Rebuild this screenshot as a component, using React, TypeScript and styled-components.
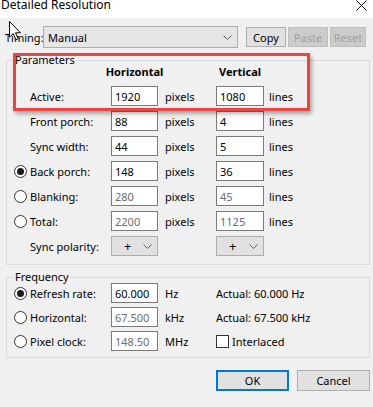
import React from 'react';
import styled, { createGlobalStyle } from 'styled-components';

const GlobalStyle = createGlobalStyle`
  html, body {
    margin: 0;
    padding: 0;
    background: #f0f0f0;
  }
  body {
    font-family: "Segoe UI", "Noto Sans", sans-serif;
    font-size: 11px;
    color: #000;
  }
`;

interface IParamRow {
	label: string;
	radio?: boolean;
	checked?: boolean;
	h: string;
	v: string;
	disabled?: boolean;
}

const paramRows: IParamRow[] = [
	{label: 'Active:', h: '1920', v: '1080'},
	{label: 'Front porch:', h: '88', v: '4'},
	{label: 'Sync width:', h: '44', v: '5'},
	{label: 'Back porch:', radio: true, checked: true, h: '148', v: '36'},
	{label: 'Blanking:', radio: true, h: '280', v: '45', disabled: true},
	{label: 'Total:', radio: true, h: '2200', v: '1125', disabled: true},
];

const freqRows = [
	{label: 'Refresh rate:', value: '60.000', unit: 'Hz', checked: true, disabled: false},
	{label: 'Horizontal:', value: '67.500', unit: 'kHz', checked: false, disabled: true},
	{label: 'Pixel clock:', value: '148.50', unit: 'MHz', checked: false, disabled: true},
];

const Chevron = () => (
	<svg width="9" height="5" viewBox="0 0 9 5">
		<polyline points="0.5,0.5 4.5,4.5 8.5,0.5" fill="none" stroke="#606060" strokeWidth="1"/>
	</svg>
);

export default function App() {
	return (
		<Window>
			<GlobalStyle/>
			<TitleBar>
				<Title>Detailed Resolution</Title>
				<svg width="11" height="11" viewBox="0 0 11 11" style={{marginRight: 6}}>
					<path d="M0.5 0.5 L10.5 10.5 M10.5 0.5 L0.5 10.5" stroke="#111" strokeWidth="1"/>
				</svg>
			</TitleBar>

			<Toolbar>
				<TimingLabel>Timing:</TimingLabel>
				<Combo>
					<span>Manual</span>
					<Chevron/>
				</Combo>
				<ToolButton>Copy</ToolButton>
				<ToolButton disabled>Paste</ToolButton>
				<ToolButton disabled $width={36}>Reset</ToolButton>
			</Toolbar>

			<Group>
				<Legend>Parameters</Legend>
				<HeaderRow>
					<ColumnHead $col={3}>Horizontal</ColumnHead>
					<ColumnHead $col={5}>Vertical</ColumnHead>
				</HeaderRow>
				<Grid>
					{paramRows.map(row => (
						<React.Fragment key={row.label}>
							<RadioCell>{row.radio && <Radio $checked={row.checked}/>}</RadioCell>
							<Label>{row.label}</Label>
							<Field $disabled={row.disabled}>{row.h}</Field>
							<Unit>pixels</Unit>
							<Field $disabled={row.disabled} $width={48}>{row.v}</Field>
							<Unit $pad={5}>lines</Unit>
						</React.Fragment>
					))}
					<RadioCell/>
					<Label>Sync polarity:</Label>
					<Select><span>+</span><Chevron/></Select>
					<span/>
					<Select $width={48}><span>+</span><Chevron/></Select>
					<span/>
				</Grid>
			</Group>

			<Group $top={6} $bottom={6}>
				<Legend>Frequency</Legend>
				<Grid $gap={4}>
					{freqRows.map((row, i) => (
						<React.Fragment key={row.label}>
							<RadioCell><Radio $checked={row.checked}/></RadioCell>
							<Label>{row.label}</Label>
							<Field $disabled={row.disabled}>{row.value}</Field>
							<Unit>{row.unit}</Unit>
							<Extra>
								{i === 0 && 'Actual: 60.000 Hz'}
								{i === 1 && 'Actual: 67.500 kHz'}
								{i === 2 && <><Checkbox/>Interlaced</>}
							</Extra>
						</React.Fragment>
					))}
				</Grid>
			</Group>

			<Footer>
				<DialogButton $primary>OK</DialogButton>
				<DialogButton>Cancel</DialogButton>
			</Footer>

			<Highlight/>
			<Cursor width="13" height="20" viewBox="0 0 13 20">
				<path d="M0.5 0.5 L0.5 16 L4.2 12.6 L7 18.8 L9.2 17.8 L6.5 11.8 L11.5 11.8 Z" fill="#fff" stroke="#000" strokeWidth="1"/>
			</Cursor>
		</Window>
	);
}


const Window = styled.div`
  position: relative;
  width: 373px;
  height: 407px;
  background: #f0f0f0;
  overflow: hidden;
  display: flex;
  flex-direction: column;
`;

const TitleBar = styled.div`
  height: 18px;
  flex-shrink: 0;
  background: #ffffff;
  display: flex;
  justify-content: space-between;
  align-items: flex-start;
`;

const Title = styled.span`
  font-size: 12px;
  line-height: 12px;
  margin-top: -1px;
  padding-left: 1px;
`;

const Toolbar = styled.div`
  display: flex;
  align-items: center;
  height: 22px;
  margin-top: 8px;
  padding-left: 5px;
`;

const TimingLabel = styled.span`
  width: 38px;
`;

const Combo = styled.div`
  box-sizing: border-box;
  width: 195px;
  height: 22px;
  margin-right: 8px;
  padding: 0 5px 0 4px;
  display: flex;
  align-items: center;
  justify-content: space-between;
  background: #e5e5e5;
  border: 1px solid #adadad;
`;

const ToolButton = styled.div<{ disabled?: boolean; $width?: number }>`
  box-sizing: border-box;
  width: ${p => p.$width || 40}px;
  height: 20px;
  margin-right: 2px;
  display: flex;
  align-items: center;
  justify-content: center;
  background: ${p => p.disabled ? '#cccccc' : '#e1e1e1'};
  border: 1px solid ${p => p.disabled ? '#bfbfbf' : '#adadad'};
  color: ${p => p.disabled ? '#a0a0a0' : '#000'};
`;

const Group = styled.fieldset<{ $top?: number; $bottom?: number }>`
  margin: ${p => p.$top ?? 6}px 3px 0 6px;
  padding: 0 7px ${p => p.$bottom ?? 8}px 7px;
  min-width: 0;
  border: 1px solid #dcdcdc;
`;

const Legend = styled.legend`
  padding: 0 1px;
  font-size: 11px;
  line-height: 12px;
`;

const columns = '16px 81px 47px 58px 48px 1fr';

const HeaderRow = styled.div`
  display: grid;
  grid-template-columns: ${columns};
  height: 14px;
  margin: -1px 0 7px;
`;

const ColumnHead = styled.div<{ $col: number }>`
  grid-column: ${p => p.$col};
  justify-self: center;
  white-space: nowrap;
  font-weight: 700;
  line-height: 14px;
`;

const Grid = styled.div<{ $gap?: number }>`
  display: grid;
  grid-template-columns: ${columns};
  grid-auto-rows: 20px;
  row-gap: ${p => p.$gap ?? 5}px;
  align-items: center;
`;

const RadioCell = styled.div`
  display: flex;
  align-items: center;
`;

const Radio = styled.span<{ $checked?: boolean }>`
  box-sizing: border-box;
  width: 13px;
  height: 13px;
  border: 1px solid #333;
  border-radius: 50%;
  background: #fff;
  display: flex;
  align-items: center;
  justify-content: center;

  &::after {
    content: '';
    width: 7px;
    height: 7px;
    border-radius: 50%;
    background: ${p => p.$checked ? '#1a1a1a' : 'transparent'};
  }
`;

const Label = styled.span`
  white-space: nowrap;
`;

const Field = styled.div<{ $disabled?: boolean; $width?: number }>`
  box-sizing: border-box;
  width: ${p => p.$width || 47}px;
  height: 20px;
  padding-left: 3px;
  display: flex;
  align-items: center;
  background: #fff;
  border: 1px solid #7a7a7a;
  color: ${p => p.$disabled ? '#6d6d6d' : '#000'};
`;

const Unit = styled.span<{ $pad?: number }>`
  padding-left: ${p => p.$pad ?? 7}px;
  white-space: nowrap;
`;

const Select = styled.div<{ $width?: number }>`
  box-sizing: border-box;
  width: ${p => p.$width || 47}px;
  height: 20px;
  padding: 0 5px 0 12px;
  display: flex;
  align-items: center;
  justify-content: space-between;
  background: #e1e1e1;
  border: 1px solid #adadad;
  font-size: 13px;
`;

const Extra = styled.div`
  grid-column: 5 / span 2;
  display: flex;
  align-items: center;
  gap: 3px;
  white-space: nowrap;
`;

const Checkbox = styled.span`
  box-sizing: border-box;
  width: 13px;
  height: 13px;
  background: #fff;
  border: 1px solid #333;
`;

const Footer = styled.div`
  display: flex;
  justify-content: flex-end;
  gap: 8px;
  margin-top: 12px;
  padding-right: 3px;
`;

const DialogButton = styled.div<{ $primary?: boolean }>`
  box-sizing: border-box;
  width: 73px;
  height: 21px;
  display: flex;
  align-items: center;
  justify-content: center;
  background: #e1e1e1;
  border: ${p => p.$primary ? '2px solid #0078d7' : '1px solid #adadad'};
`;

const Highlight = styled.div`
  position: absolute;
  left: 13px;
  top: 53px;
  width: 297px;
  height: 58px;
  box-sizing: border-box;
  border: 3px solid #f0433f;
  box-shadow: 2px 3px 4px rgba(0, 0, 0, 0.3);
  pointer-events: none;
`;

const Cursor = styled.svg`
  position: absolute;
  left: 9px;
  top: 21px;
`;
